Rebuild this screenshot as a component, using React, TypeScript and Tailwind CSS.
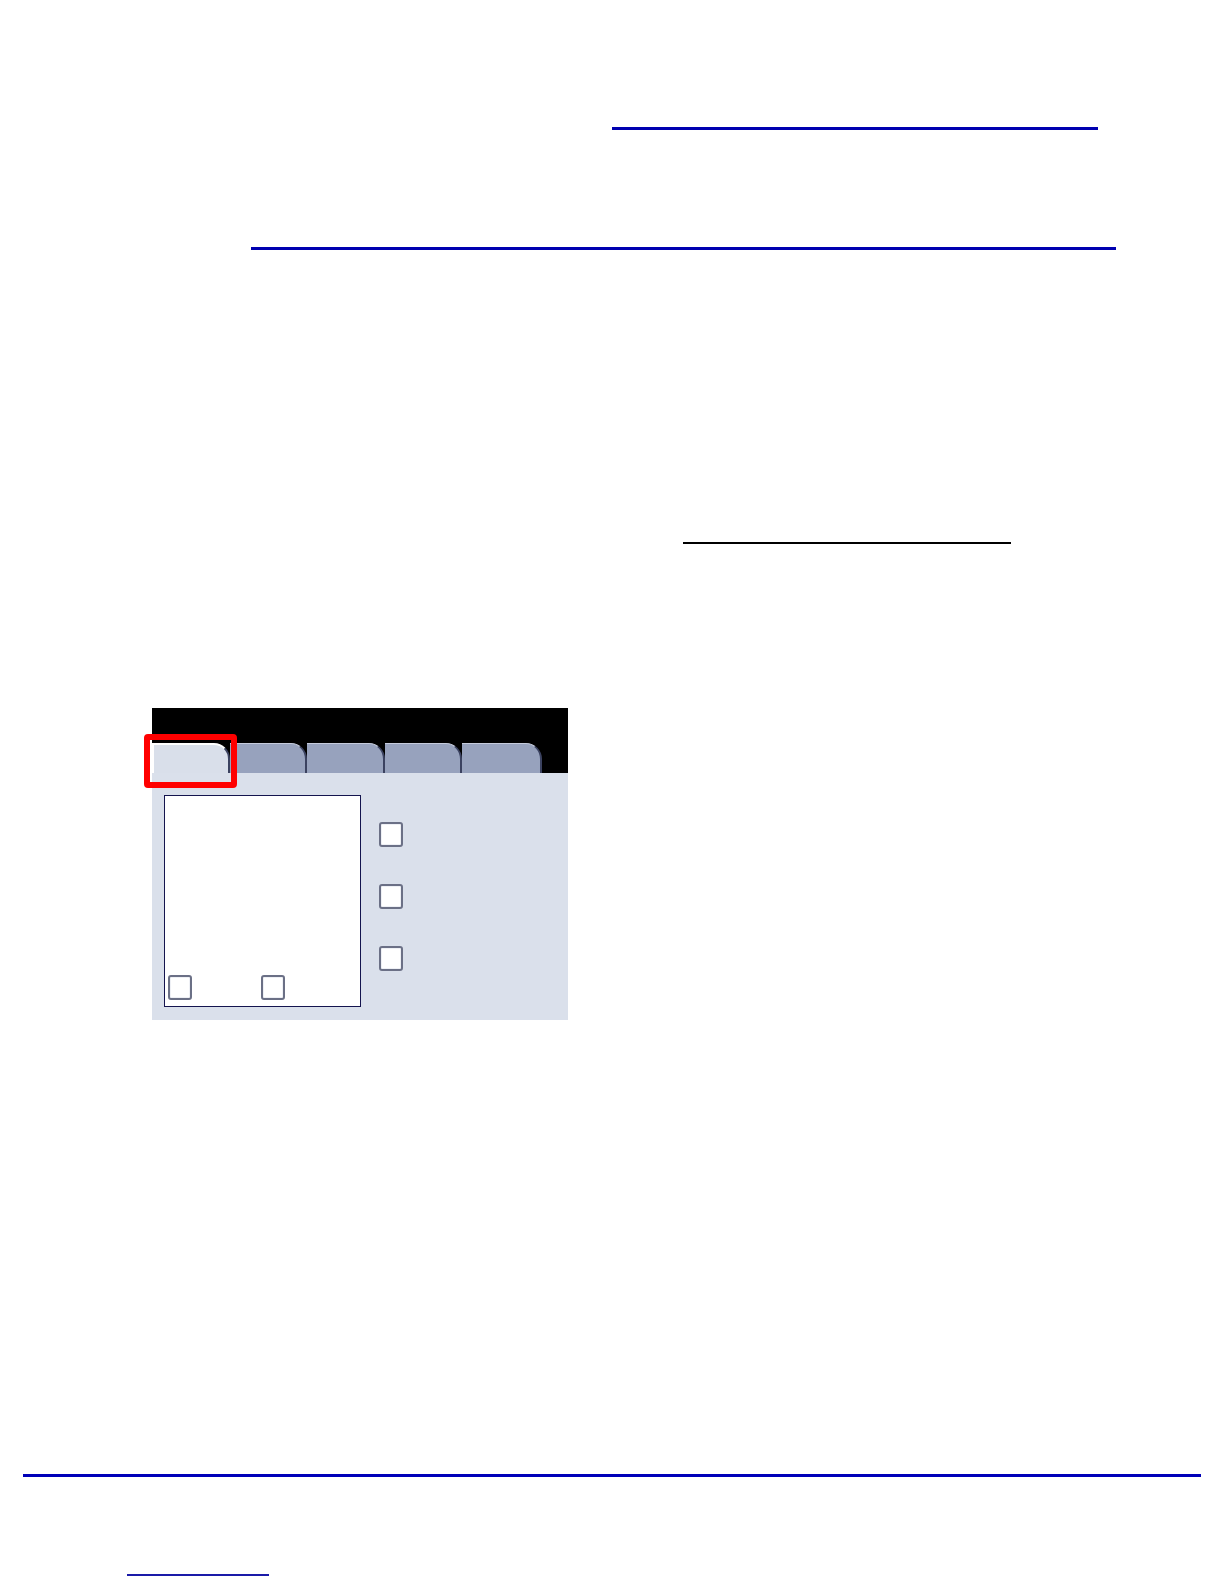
const tabs = [
  { name: "General", width: "w-[78px]" },
  { name: "Layout", width: "w-[77px]" },
  { name: "Quality", width: "w-[78px]" },
  { name: "Output", width: "w-[77px]" },
  { name: "Options", width: "w-[80px]" },
];

function CheckBox() {
  return (
    <div className="h-[25px] w-[24px] rounded-[3px] border-2 border-[#6b7086] bg-white shadow-[inset_0_0_0_1px_#eef0f5]" />
  );
}

function TabStrip() {
  return (
    <div className="flex h-[30px] items-end bg-black">
      {tabs.map((tab, index) => (
        <div
          key={tab.name}
          title={tab.name}
          className={`${tab.width} ${
            index === 0
              ? "h-[30px] rounded-tr-[16px] border-l-2 border-t-2 border-r-2 border-l-white border-t-white border-r-[#3b4260] bg-[#d9dfea]"
              : "h-[30px] rounded-tr-[16px] border-t border-r-2 border-t-[#c5cbdc] border-r-[#3b4260] bg-[#97a2bd]"
          }`}
        />
      ))}
    </div>
  );
}

export default function App() {
  return (
    <div className="h-[1584px] w-[1224px] overflow-hidden bg-white font-['Liberation_Sans',Arial,sans-serif]">
      <div className="ml-[612px] mt-[127px] h-[3px] w-[486px] bg-[#0000b0]" />
      <div className="ml-[251px] mt-[117px] h-[3px] w-[865px] bg-[#0000b0]" />
      <div className="ml-[683px] mt-[292px] h-[2px] w-[328px] bg-black" />

      <div className="relative ml-[152px] mt-[164px] w-[416px]">
        <div className="h-[35px] bg-black" />
        <TabStrip />
        <div className="flex h-[247px] bg-[#dae0eb] pl-[12px] pt-[22px]">
          <div className="flex h-[212px] w-[197px] items-end gap-[69px] border border-[#14144e] bg-white pb-[6px] pl-[3px]">
            <CheckBox />
            <CheckBox />
          </div>
          <div className="ml-[18px] mt-[27px] flex flex-col gap-[37px]">
            <CheckBox />
            <CheckBox />
            <CheckBox />
          </div>
        </div>
        <div className="absolute left-[-8px] top-[26px] h-[54px] w-[93px] rounded-[4px] border-[6px] border-[#ff0000]" />
      </div>

      <div className="ml-[23px] mt-[454px] h-[3px] w-[1178px] bg-[#0000b8]" />
      <div className="ml-[127px] mt-[97px] h-[2px] w-[142px] bg-[#1a1aa8]" />
    </div>
  );
}
